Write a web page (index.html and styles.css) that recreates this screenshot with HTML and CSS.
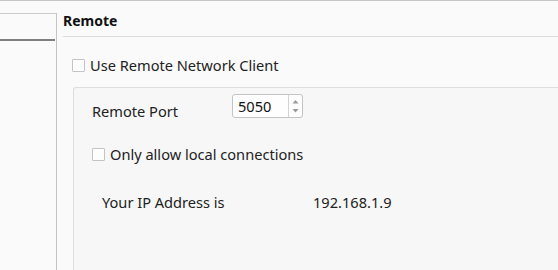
FILE: index.html
```html
<!DOCTYPE html>
<html>
<head>
<meta charset="utf-8">
<link rel="stylesheet" href="styles.css">
</head>
<body>
<div class="window">
  <div class="sidebar">
    <div class="side-frame">
      <div class="side-item"></div>
    </div>
  </div>
  <div class="main">
    <div class="title">Remote</div>
    <div class="content">
      <label class="check-row">
        <span class="checkbox"></span>
        <span>Use Remote Network Client</span>
      </label>
      <div class="group">
        <div class="port-row">
          <span class="port-label">Remote Port</span>
          <div class="spin">
            <span class="spin-value">5050</span>
            <span class="spin-buttons">
              <svg width="13" height="22" viewBox="0 0 13 22">
                <path d="M3.5 8.5 L6.5 5 L9.5 8.5 Z" fill="#9a9a9a"/>
                <path d="M3.5 14 L6.5 17.5 L9.5 14 Z" fill="#9a9a9a"/>
              </svg>
            </span>
          </div>
        </div>
        <label class="check-row local">
          <span class="checkbox"></span>
          <span>Only allow local connections</span>
        </label>
        <div class="ip-row">
          <span class="ip-label">Your IP Address is</span>
          <span class="ip-value">192.168.1.9</span>
        </div>
      </div>
    </div>
  </div>
</div>
</body>
</html>
```
FILE: styles.css
```css
html, body {
  margin: 0;
  padding: 0;
  background: #fafafa;
}
body {
  font-family: "Noto Sans", "Open Sans", sans-serif;
  font-size: 14.6px;
  color: #222;
  width: 558px;
  height: 270px;
  overflow: hidden;
}
.window {
  border-top: 1px solid #c6c6c6;
  height: 269px;
  display: flex;
}
.sidebar {
  width: 57px;
  flex: none;
  padding-top: 12px;
  display: flex;
  flex-direction: column;
}
.side-frame {
  flex: 1;
  border-top: 1px solid #cbcbcb;
  border-right: 1px solid #c4c4c4;
}
.side-item {
  height: 25px;
  border-bottom: 2px solid #7f7f7f;
  margin-right: 1px;
}
.main {
  flex: 1;
  padding-top: 10px;
  padding-left: 6px;
  display: flex;
  flex-direction: column;
}
.title {
  font-size: 14px;
  font-weight: bold;
  line-height: 20px;
  padding-bottom: 5px;
  border-bottom: 1px solid #dadada;
  color: #111;
}
.content {
  flex: 1;
  padding-left: 9px;
  display: flex;
  flex-direction: column;
}
.check-row {
  display: flex;
  align-items: center;
  gap: 5px;
  line-height: 20px;
  margin-top: 18px;
}
.checkbox {
  width: 11px;
  height: 11px;
  border: 1px solid #c4c4c4;
  border-radius: 1px;
  background: #fdfdfd;
  flex: none;
}
.group {
  flex: 1;
  margin-top: 12px;
  margin-left: 1px;
  border-top: 1px solid #dedede;
  border-left: 1px solid #dedede;
  border-top-left-radius: 3px;
  background: #f7f7f7;
  padding-left: 18px;
  padding-top: 6px;
  display: flex;
  flex-direction: column;
}
.port-row {
  display: flex;
  align-items: center;
  height: 24px;
}
.port-label {
  width: 140px;
  line-height: 20px;
  padding-top: 10px;
}
.spin {
  width: 69px;
  height: 22px;
  border: 1px solid #c4c4c4;
  border-radius: 3px;
  background: #fefefe;
  display: flex;
  align-items: center;
  justify-content: space-between;
}
.spin-value {
  padding-left: 5px;
  color: #111;
}
.spin-buttons {
  width: 13px;
  height: 22px;
  border-left: 1px solid #d4d4d4;
  display: flex;
}
.check-row.local {
  margin-top: 26px;
}
.ip-row {
  display: flex;
  line-height: 20px;
  margin-top: 28px;
  padding-left: 10px;
}
.ip-label {
  width: 211px;
}
```
